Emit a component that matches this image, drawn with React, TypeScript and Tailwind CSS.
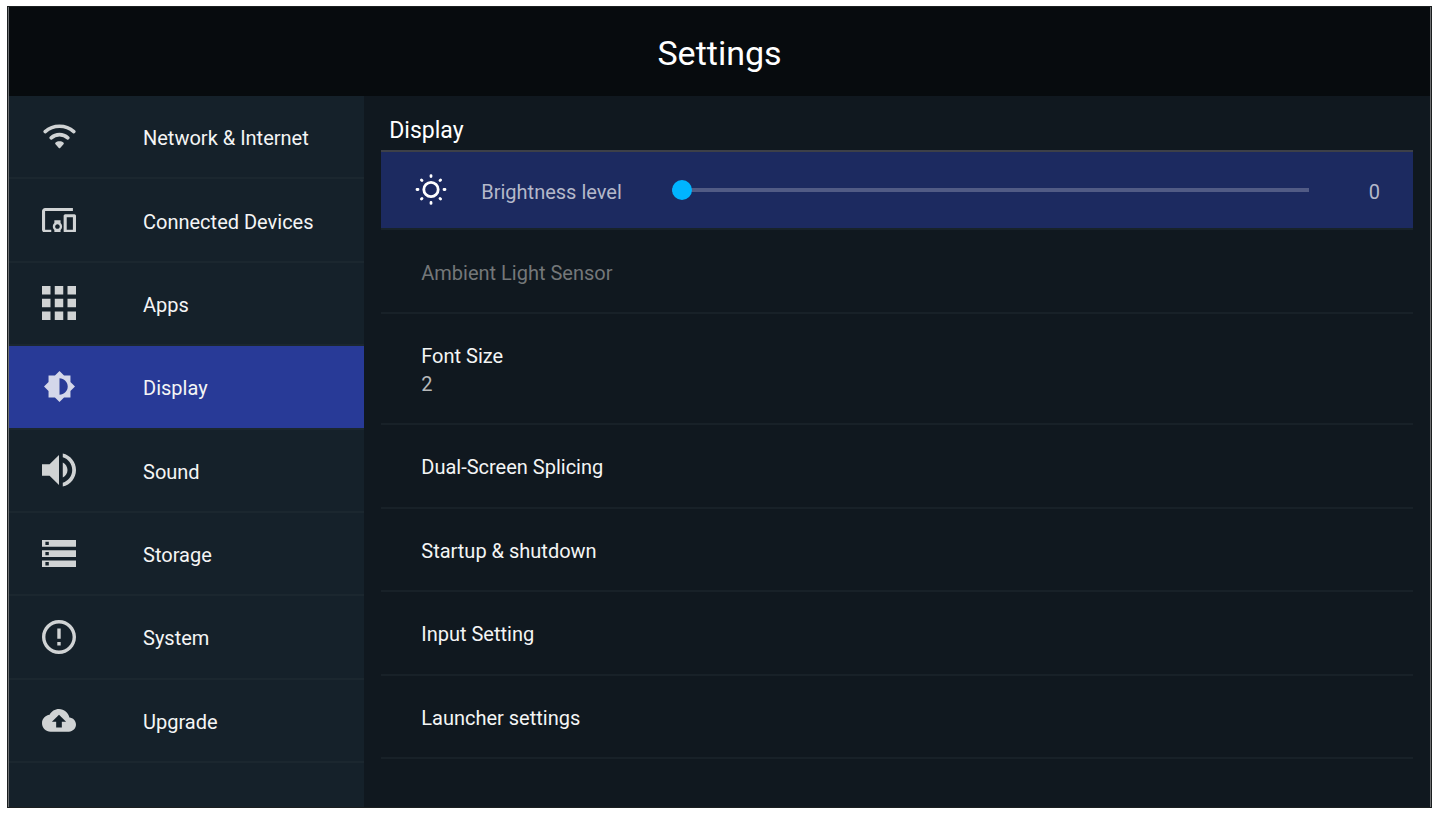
import { useState } from "react";

const menu = [
  {
    label: "Network & Internet",
    size: "w-[33px]",
    viewBox: "0 0 33 25",
    d: "M16.5 17.3c-1.6 0-3 .5-3.9 1.3-.6.5-.6 1.1-.1 1.6l3.3 3.7c.4.5 1 .5 1.4 0l3.3-3.7c.5-.5.5-1.1-.1-1.6-.9-.8-2.3-1.3-3.9-1.3z",
    arcs: "M2.2 7.6C10.2.4 22.8.4 30.8 7.6M8.2 13.8C12.9 9.6 20.1 9.6 24.8 13.8",
  },
  {
    label: "Connected Devices",
    size: "w-[34px]",
    viewBox: "1 4 22 16",
    d: "M3 6h18V4H3c-1.1 0-2 .9-2 2v12c0 1.1.9 2 2 2h4v-2H3V6zm10 6H9v1.78c-.61.55-1 1.33-1 2.22s.39 1.67 1 2.22V20h4v-1.78c.61-.55 1-1.34 1-2.22s-.39-1.67-1-2.22V12zm-2 5.5c-.83 0-1.5-.67-1.5-1.5s.67-1.5 1.5-1.5 1.5.67 1.5 1.5-.67 1.5-1.5 1.5zM22 8h-6c-.5 0-1 .5-1 1v10c0 .5.5 1 1 1h6c.5 0 1-.5 1-1V9c0-.5-.5-1-1-1zm-1 10h-4v-8h4v8z",
  },
  {
    label: "Apps",
    size: "w-[34px]",
    viewBox: "4 4 16 16",
    d: "M4 8h4V4H4v4zm6 12h4v-4h-4v4zm-6 0h4v-4H4v4zm0-6h4v-4H4v4zm6 0h4v-4h-4v4zm6-10v4h4V4h-4zm-6 4h4V4h-4v4zm6 6h4v-4h-4v4zm0 6h4v-4h-4v4z",
  },
  {
    label: "Display",
    size: "w-[31px]",
    viewBox: "0.69 0.69 22.62 22.62",
    d: "M20 15.31L23.31 12 20 8.69V4h-4.69L12 .69 8.69 4H4v4.69L.69 12 4 15.31V20h4.69L12 23.31 15.31 20H20v-4.69zM12 18V6c3.31 0 6 2.69 6 6s-2.69 6-6 6z",
  },
  {
    label: "Sound",
    size: "w-[34px]",
    viewBox: "3 3 18 18",
    d: "M3 9v6h4l5 5V4L7 9H3zm13.5 3c0-1.77-1.02-3.29-2.5-4.03v8.05c1.48-.73 2.5-2.25 2.5-4.02zM14 3.23v2.06c2.89.86 5 3.54 5 6.71s-2.11 5.85-5 6.71v2.06c4.01-.91 7-4.49 7-8.77s-2.99-7.86-7-8.77z",
  },
  {
    label: "Storage",
    size: "w-[34px]",
    viewBox: "2 4 20 16",
    d: "M2 20h20v-4H2v4zm2-3h2v2H4v-2zM2 4v4h20V4H2zm4 3H4V5h2v2zm-4 7h20v-4H2v4zm2-3h2v2H4v-2z",
  },
  {
    label: "System",
    size: "w-[34px]",
    viewBox: "2 2 20 20",
    d: "M11 15h2v2h-2zm0-8h2v6h-2zm.99-5C6.47 2 2 6.48 2 12s4.47 10 9.99 10C17.52 22 22 17.52 22 12S17.52 2 11.99 2zM12 20c-4.42 0-8-3.58-8-8s3.58-8 8-8 8 3.58 8 8-3.58 8-8 8z",
  },
  {
    label: "Upgrade",
    size: "w-[34px]",
    viewBox: "0 4 24 16",
    d: "M19.35 10.04C18.67 6.59 15.64 4 12 4 9.11 4 6.6 5.64 5.35 8.04 2.34 8.36 0 10.91 0 14c0 3.31 2.69 6 6 6h13c2.76 0 5-2.24 5-5 0-2.64-2.05-4.78-4.65-4.96zM14 13v4h-4v-4H7l5-5 5 5h-3z",
  },
];

const links = ["Dual-Screen Splicing", "Startup & shutdown", "Input Setting", "Launcher settings"];

const SunIcon = () => (
  <svg
    viewBox="0 0 32 32"
    className="w-8 h-8 shrink-0 text-white"
    fill="none"
    stroke="currentColor"
    strokeLinecap="round"
    strokeWidth="2.8"
    aria-hidden="true"
  >
    <circle cx="16" cy="15.5" r="7.2" />
    <path d="M16 1.6v1M16 28.4v1M2 15.5h1M29 15.5h1M6.4 5.9l.6.6M25 24.5l.6.6M6.4 25.1l.6-.6M25 6.5l.6-.6" />
  </svg>
);

export default function App() {
  const [active, setActive] = useState("Display");
  const [brightness, setBrightness] = useState(0);

  return (
    <div className="min-h-screen bg-white pt-[6px] pb-[10px] pl-[7px] pr-2 font-['Roboto',sans-serif] text-[20px] leading-7 text-[#f4f5f5]">
      <div className="min-h-[802px] flex flex-col border border-[#1b1f20] bg-[#10181f]">
        <header className="h-[89px] flex items-center justify-center border-x border-[#6f7173] bg-[#070b0e] pt-[2px]">
          <h1 className="text-[34px] leading-10 text-white">Settings</h1>
        </header>

        <div className="flex-1 flex border-x border-[#6f7173]">
          {/* Sidebar */}
          <nav className="w-1/4 bg-[#15212a]">
            <ul className="h-[667px] grid auto-rows-fr">
              {menu.map(({ label, size, viewBox, d, arcs }) => (
                <li key={label} className="flex border-b-2 border-[#1b272f]">
                  <button
                    onClick={() => setActive(label)}
                    aria-current={active === label ? "page" : undefined}
                    className={`flex-1 flex items-center text-left ${
                      active === label ? "bg-[#283a97]" : ""
                    }`}
                  >
                    <span className="w-[100px] flex justify-center">
                      <svg
                        viewBox={viewBox}
                        className={`${size} ${active === label ? "text-[#d4d7ea]" : "text-[#d0d3d4]"}`}
                        fill="currentColor"
                        aria-hidden="true"
                      >
                        <path d={d} />
                        {arcs && (
                          <path d={arcs} fill="none" stroke="currentColor" strokeWidth="3.6" strokeLinecap="round" />
                        )}
                      </svg>
                    </span>
                    <span className="pl-[34px] pt-[3px]">{label}</span>
                  </button>
                </li>
              ))}
            </ul>
          </nav>

          {/* Settings panel */}
          <main className="flex-1 px-[17px]">
            <h2 className="h-[54px] flex items-end pb-[3px] pl-2 text-[23px] leading-8 text-white">
              Display
            </h2>

            <div className="h-[80px] flex items-center border-t-2 border-b-2 border-t-[#3d4048] border-b-[#18232a] bg-[#1c2a60] pl-[34px] pr-[33px]">
              <SunIcon />
              <label htmlFor="brightness" className="pl-[34px] w-[225px] shrink-0 pt-[3px] text-[#b4b8ca]">
                Brightness level
              </label>
              <input
                id="brightness"
                type="range"
                min={0}
                max={100}
                value={brightness}
                onChange={(e) => setBrightness(Number(e.target.value))}
                className="flex-1 min-w-0 h-5 appearance-none bg-transparent [&::-webkit-slider-runnable-track]:h-1 [&::-webkit-slider-runnable-track]:bg-[#515b85] [&::-webkit-slider-thumb]:appearance-none [&::-webkit-slider-thumb]:-mt-2 [&::-webkit-slider-thumb]:size-5 [&::-webkit-slider-thumb]:rounded-full [&::-webkit-slider-thumb]:bg-[#00b4ff]"
              />
              <output htmlFor="brightness" className="w-[71px] pt-[3px] text-right text-[#b4b8ca]">
                {brightness}
              </output>
            </div>

            <button
              disabled
              className="w-full h-[84px] flex items-center border-b-2 border-[#182128] pl-10 pt-[3px] text-[#747779]"
            >
              Ambient Light Sensor
            </button>
            <button className="w-full h-[111px] flex flex-col justify-center border-b-2 border-[#182128] pl-10 pt-[3px] text-left">
              <span>Font Size</span>
              <span className="text-[#b6b8ba]">2</span>
            </button>
            <ul className="h-[334px] grid auto-rows-fr">
              {links.map((label) => (
                <li key={label} className="flex border-b-2 border-[#182128]">
                  <button className="flex-1 pl-10 pt-[3px] text-left">{label}</button>
                </li>
              ))}
            </ul>
          </main>
        </div>
      </div>
    </div>
  );
}
